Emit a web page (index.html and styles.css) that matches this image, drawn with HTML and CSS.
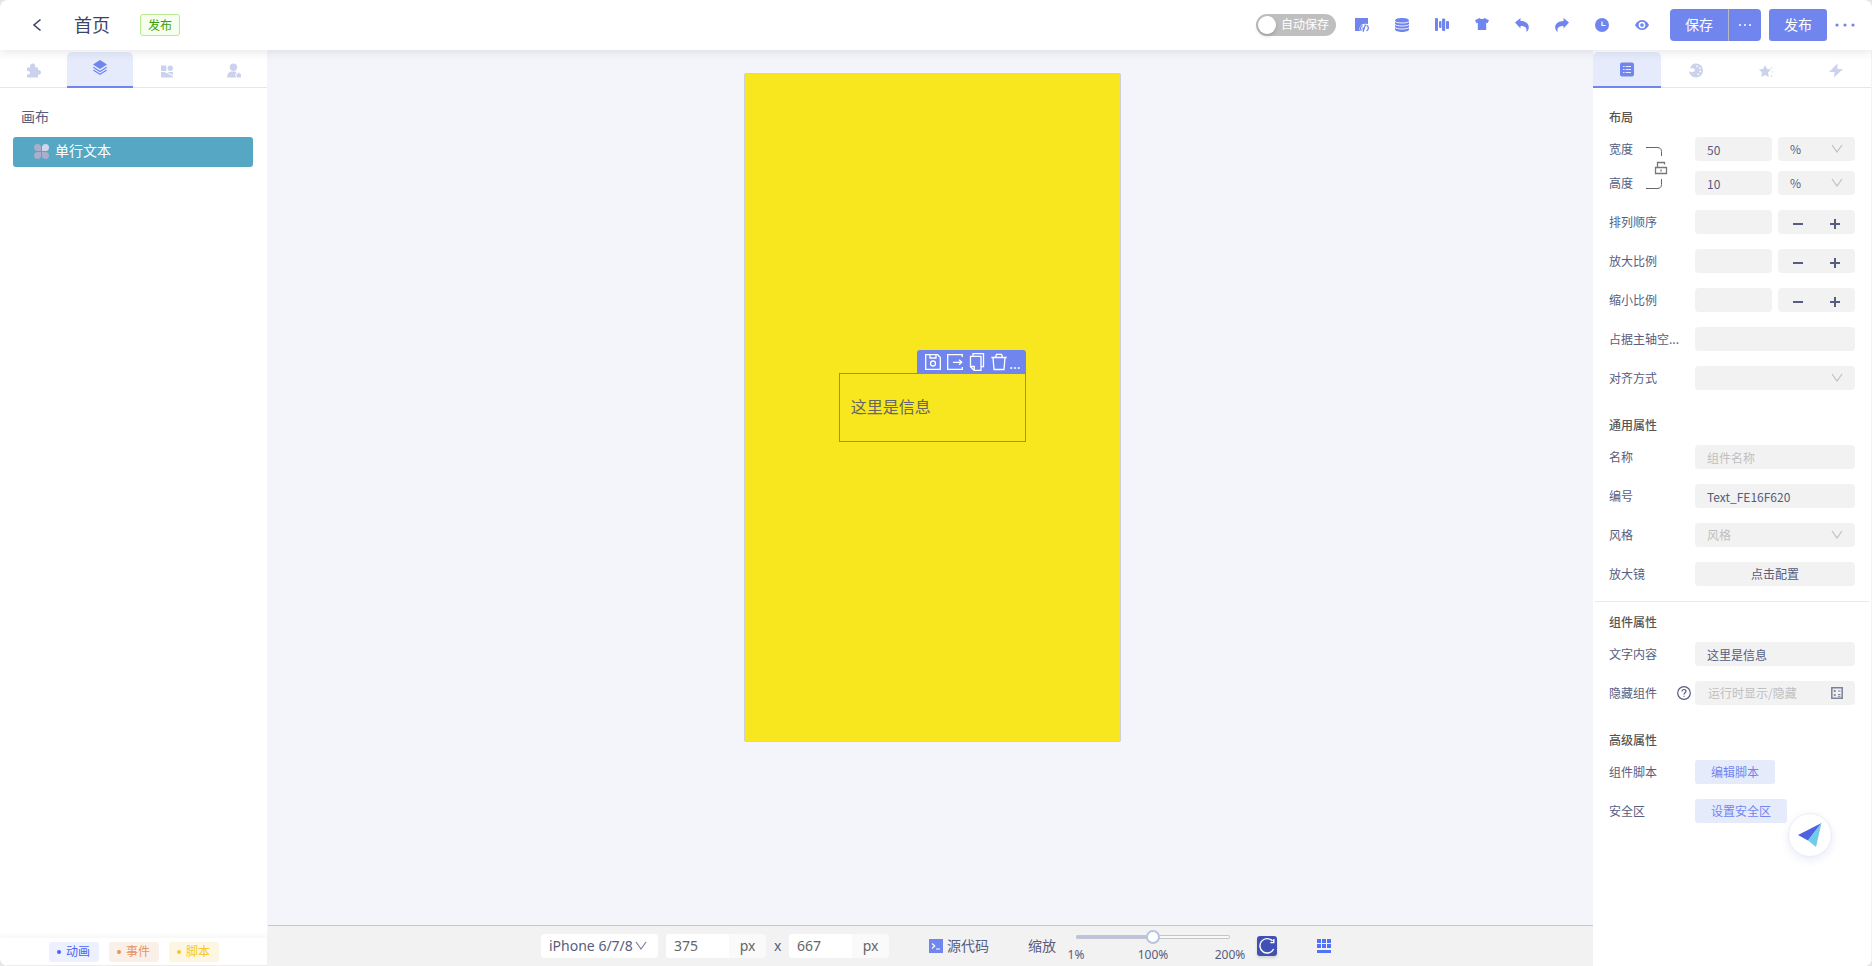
FILE: index.html
```html
<!DOCTYPE html>
<html lang="zh-CN">
<head>
<meta charset="utf-8">
<title>首页</title>
<link rel="stylesheet" href="styles.css">
</head>
<body>
<svg class="defs" aria-hidden="true">
  <symbol id="chev" viewBox="0 0 12 10"><path d="M1 1l5 7 5-7" fill="none" stroke="currentColor" stroke-width="1.2"/></symbol>
</svg>
<div class="app">
  <header class="topbar">
    <button class="icon-btn back" aria-label="返回"><svg width="10" height="14" viewBox="0 0 10 14"><path d="M8.500 1.500L2 7l6.500 5.500" fill="none" stroke="#3c4468" stroke-width="1.600"/></svg></button>
    <h1 class="title">首页</h1>
    <span class="status">发布</span>
    <div class="tools">
      <label class="switch"><input type="checkbox"><span class="knob"></span><span>自动保存</span></label>
      <button class="icon-btn tool" aria-label="代码"><svg viewBox="0 0 14 14"><path d="M0 0h13v6.200C9 5 5 6.500 4.500 10c0 1.200 0 2.200.5 3H0z" fill="currentColor"/><path d="M7.500 7.300C5 8.500 5 11.500 6.500 12.800M11.500 7.300c2.500 1 2.500 4.300 0 5.500M10.500 6.500l-2.500 7.200M8 9.500v2" fill="none" stroke="currentColor" stroke-width="1.300"/></svg></button>
      <button class="icon-btn tool" aria-label="数据"><svg viewBox="0 0 14 14"><path d="M0 2.500C0-.8 14-.8 14 2.500v9c0 3.300-14 3.300-14 0z" fill="currentColor"/><path d="M0 3.500c2 2 12 2 14 0M0 6.500c2 2 12 2 14 0M0 9.500c2 2 12 2 14 0" fill="none" stroke="#fff" stroke-width=".9"/></svg></button>
      <button class="icon-btn tool" aria-label="对齐"><svg viewBox="0 0 14 14" fill="currentColor"><rect width="3" height="13" rx="1"/><rect x="4" y="3" width="2.500" height="7" rx="1"/><rect x="7" y="0.500" width="3.200" height="12.500" rx="1"/><rect x="11" y="3" width="3" height="8" rx="1"/></svg></button>
      <button class="icon-btn tool" aria-label="主题"><svg viewBox="0 0 14 14" fill="currentColor"><path d="M4.500 0c1 1.300 4 1.300 5 0L14 2.200l-1.500 3-1.300-.5V12H2.800V4.700l-1.300.5L0 2.200z"/></svg></button>
      <button class="icon-btn tool" aria-label="撤销"><svg viewBox="0 0 14 14" fill="currentColor"><path d="M0 4.600L5.500 0v3c5.500 0 8.500 3 8.300 6.500-.1 2-1 3.500-2.600 4.500 1.300-4-1-6-5.700-6v2.500z"/></svg></button>
      <button class="icon-btn tool" aria-label="重做"><svg viewBox="0 0 14 14" fill="currentColor"><path d="M14 4.600L8.500 0v3C3 3 0 6 .2 9.500c.1 2 1 3.500 2.600 4.500-1.300-4 1-6 5.700-6v2.500z"/></svg></button>
      <button class="icon-btn tool" aria-label="历史"><svg viewBox="0 0 14 14"><circle cx="7" cy="7" r="7" fill="currentColor"/><path d="M7 3.500v4h3.500" fill="none" stroke="#fff" stroke-width="1.200"/></svg></button>
      <button class="icon-btn tool" aria-label="预览"><svg viewBox="0 0 14 14"><path d="M0 7C3.500.4 10.500.4 14 7 10.500 13.600 3.500 13.600 0 7z" fill="currentColor"/><circle cx="7" cy="7" r="2.600" fill="currentColor" stroke="#fff" stroke-width="1.500"/></svg></button>
    </div>
    <div class="actions">
      <div class="split"><button class="primary">保存</button><button class="primary more" aria-label="更多保存"><svg width="14" height="4" viewBox="0 0 14 4" fill="#fff"><circle cx="2" cy="2" r="1"/><circle cx="7" cy="2" r="1"/><circle cx="12" cy="2" r="1"/></svg></button></div>
      <button class="primary">发布</button>
      <button class="icon-btn" aria-label="更多"><svg width="20" height="4" viewBox="0 0 20 4" fill="#7086ee"><circle cx="2" cy="2" r="1.600"/><circle cx="10" cy="2" r="1.600"/><circle cx="18" cy="2" r="1.600"/></svg></button>
    </div>
  </header>

  <div class="body">
    <aside class="left">
      <nav class="tabs">
        <button class="tab" aria-label="组件"><svg viewBox="0 0 14 14" fill="currentColor"><path d="M0 4h3.200C2.400 1.800 4 0 5.700 0S9 1.800 8.200 4H11v2.600c1.500-.6 3 .4 3 2.200s-1.500 2.900-3 2.200V14H0v-3.200c1.800.6 3-.3 3-1.500S1.800 7 0 7.600z"/></svg></button>
        <button class="tab active" aria-label="图层"><svg viewBox="0 0 14 15"><path d="M7 0l7 4.500L7 9 0 4.500z" fill="currentColor"/><path d="M.3 7.300L7 11.500l6.700-4.200M.3 10L7 14.200l6.700-4.200" fill="none" stroke="currentColor" stroke-width="1.200"/></svg></button>
        <button class="tab" aria-label="模板"><svg viewBox="0 0 14 14" fill="currentColor"><path d="M1 2h5.400v5.400H1zM1 8.500h3L8 10l5 3v1H1zM7 8.500h6v3z"/><circle cx="10.300" cy="4.700" r="2.700"/></svg></button>
        <button class="tab" aria-label="用户"><svg viewBox="0 0 14 14" fill="currentColor"><circle cx="6.500" cy="3.700" r="3.700"/><path d="M0 14c.3-3.500 1.500-5.500 4-6h4c.8.2 1.300.7 1.600 1.400L8 11l1.200 3zM9.500 10.500h1.200c0-2 2-2 2 0H14v3.500H9.800v-1.200c-1 0-1-1.300-.3-1.300z"/></svg></button>
      </nav>
      <div class="tree">
        <h2 class="tree-title">画布</h2>
        <button class="node"><svg width="15" height="15" viewBox="0 0 15 15" fill="#a9aecb"><path d="M7 7H3.500A3.500 3.500 0 1 1 7 3.500zM7 8v3.500A3.500 3.500 0 1 1 3.500 8zM8 8h3.500A3.500 3.500 0 1 1 8 11.500z"/><path d="M8 7V3.500A3.500 3.500 0 1 1 11.500 7z" fill="#d3d6ea"/></svg>单行文本</button>
      </div>
      <footer class="legend">
        <button class="tag blue">动画</button><button class="tag orange">事件</button><button class="tag yellow">脚本</button>
      </footer>
    </aside>

    <main class="center">
      <div class="stage">
        <div class="phone">
          <div class="selection">
            <div class="mini">
              <button aria-label="保存"><svg viewBox="0 0 16 18"><path d="M.7 1.700h12L15.300 4.500v11.800H.7zM5 2v3h6V2" /><circle cx="8" cy="10.500" r="2.500"/></svg></button>
              <button aria-label="导出"><svg viewBox="0 0 16 18"><path d="M15.300 4V1.700H.7v14.600h14.600V14M6 9.300h8.500M12 6.800l2.800 2.500-2.800 2.500"/></svg></button>
              <button aria-label="复制"><svg viewBox="0 0 16 18"><path d="M4 3V.7h10.500v13H12M1.500 3.300H12v14H5l-3.500-3.500zM1.500 13.500H5.300v3.800"/></svg></button>
              <button aria-label="删除"><svg viewBox="0 0 16 18"><path d="M.3 4.500h15.400M2 4.500l1 12h10l1-12M4.500 4.300l1-3h5l1 3"/></svg></button>
              <button class="dots" aria-label="更多">...</button>
            </div>
            <span>这里是信息</span>
          </div>
        </div>
      </div>
      <footer class="bottombar">
        <div class="select device"><select aria-label="设备"><option>iPhone 6/7/8</option></select><svg class="chev"><use href="#chev"/></svg></div>
        <div class="size"><input aria-label="宽度" value="375"><span>px</span></div>
        <span class="times">x</span>
        <div class="size"><input aria-label="高度" value="667"><span>px</span></div>
        <button class="source"><svg width="14" height="14" viewBox="0 0 14 14"><path d="M0 0h14v14H0z" fill="#7086ee"/><path d="M3 4.500l2.800 2.500L3 9.500M7 10h4" fill="none" stroke="#fff" stroke-width="1.100"/></svg>源代码</button>
        <label class="zoom-label" for="zoom">缩放</label>
        <div class="zoom"><input id="zoom" type="range" min="1" max="200" value="100"><div class="marks"><span>1%</span><span>100%</span><span>200%</span></div></div>
        <button class="reload" aria-label="重置"><svg width="20" height="20" viewBox="0 0 20 20"><path d="M15.500 5A7.200 7.200 0 1 0 16.600 13M16.800 3v3.600h-3.500" fill="none" stroke="#fff" stroke-width="1.400"/></svg></button>
        <button class="icon-btn grid" aria-label="网格"><svg width="14" height="14" viewBox="0 0 14 14" fill="#5073fa"><path d="M0 0h4v4H0zM5 0h4v4H5zM10 0h4v4h-4zM0 5h4v4H0zM5 5h4v4H5zM10 5h4v4h-4zM0 11h14v3H0z"/></svg></button>
      </footer>
    </main>

    <aside class="right">
      <nav class="tabs">
        <button class="tab active" aria-label="属性"><svg viewBox="0 0 14 14"><rect width="14" height="14" rx="2" fill="currentColor"/><path d="M3 4h1.500M3 7h1.500M3 10h1.500M5.500 4H11M5.500 7H11M5.500 10H11" stroke="#e6ebfb" stroke-width="1"/></svg></button>
        <button class="tab" aria-label="样式"><svg viewBox="0 0 14 14"><path d="M4.500 0.500C10.500-1.500 14 3 14 7s-3 7-7 7S0 11 0 7.500c1.500 1.800 5 1.500 5.800-.5C6.300 5.300 4 4.500 1 4.800 1.500 3 3 1.200 4.500.5z" fill="currentColor"/><g fill="#fff"><circle cx="8" cy="2.800" r=".9"/><circle cx="10.800" cy="4.800" r=".9"/><circle cx="11.300" cy="8" r=".9"/><circle cx="9.300" cy="10.800" r=".9"/></g></svg></button>
        <button class="tab" aria-label="动效"><svg viewBox="0 0 14 14" fill="currentColor"><path d="M6 1.500l1.900 4 4.100.5-3 3 .8 4.500L6 11.400 2.200 13.500 3 9 0 6l4.100-.5zM11.500 4h1.500v1h-1.500zM12.500 8H14v1h-1.500zM11.500 12h2v1h-2z"/></svg></button>
        <button class="tab" aria-label="事件"><svg viewBox="0 0 14 14" fill="currentColor"><path d="M8.500 0L0 8.500h5.500L5 14l9-8.500H8.300z"/></svg></button>
      </nav>
      <form class="props">
        <section>
          <h2>布局</h2>
          <div class="linked">
            <div class="labels"><label for="w">宽度</label><label for="h">高度</label></div>
            <svg class="link" width="22" height="44" viewBox="0 0 22 44" fill="none" stroke="#666"><path d="M0 1.500h11q4.500 0 4.500 4V10M0 42.500h11q4.500 0 4.500-4V33"/><path d="M9.500 21.500h11v6h-11zM11.500 21v-4.500h7v2M15 23.500v2" stroke="#777" stroke-width="1.300"/></svg>
            <div class="fields">
              <div class="pair"><input id="w" value="50"><div class="select"><select aria-label="宽度单位"><option>%</option></select><svg class="chev"><use href="#chev"/></svg></div></div>
              <div class="pair"><input id="h" value="10"><div class="select"><select aria-label="高度单位"><option>%</option></select><svg class="chev"><use href="#chev"/></svg></div></div>
            </div>
          </div>
          <div class="row"><label for="o">排列顺序</label><div class="pair"><input id="o"><div class="stepper"><button type="button" class="minus" aria-label="减少"></button><button type="button" class="plus" aria-label="增加"></button></div></div></div>
          <div class="row"><label for="g">放大比例</label><div class="pair"><input id="g"><div class="stepper"><button type="button" class="minus" aria-label="减少"></button><button type="button" class="plus" aria-label="增加"></button></div></div></div>
          <div class="row"><label for="s">缩小比例</label><div class="pair"><input id="s"><div class="stepper"><button type="button" class="minus" aria-label="减少"></button><button type="button" class="plus" aria-label="增加"></button></div></div></div>
          <div class="row"><label for="b">占据主轴空...</label><input id="b"></div>
          <div class="row"><label for="a">对齐方式</label><div class="select"><select id="a"><option></option></select><svg class="chev"><use href="#chev"/></svg></div></div>
        </section>
        <section class="ruled">
          <h2>通用属性</h2>
          <div class="row"><label for="n">名称</label><input id="n" placeholder="组件名称"></div>
          <div class="row"><label for="id">编号</label><input id="id" value="Text_FE16F620"></div>
          <div class="row"><label for="st">风格</label><div class="select empty"><select id="st"><option>风格</option></select><svg class="chev"><use href="#chev"/></svg></div></div>
          <div class="row"><label for="m">放大镜</label><button type="button" class="config" id="m">点击配置</button></div>
        </section>
        <section>
          <h2>组件属性</h2>
          <div class="row"><label for="t">文字内容</label><input id="t" value="这里是信息"></div>
          <div class="row"><label for="hid">隐藏组件<svg width="14" height="14" viewBox="0 0 14 14" fill="none" stroke="#565d80" stroke-width="1.200"><circle cx="7" cy="7" r="6.300"/><path d="M5 5.500c0-2.600 4-2.600 4-.2C9 6.800 7 6.700 7 8.500M7 9.700v1.100"/></svg></label><div class="formula"><input id="hid" placeholder="运行时显示/隐藏"><svg width="12" height="12" viewBox="0 0 12 12" fill="none" stroke="#7c8199"><path d="M.8.8h10.400v10.400H.8z" stroke-width="1.500"/><path d="M2.500 4h2.500M3.700 2.800v2.400M7 4h2.500M2.700 7l2 2.200M4.700 7l-2 2.200M7 7.500h2.500M7 9.300h2.500"/></svg></div></div>
        </section>
        <section>
          <h2>高级属性</h2>
          <div class="row"><label for="js">组件脚本</label><button type="button" class="soft" id="js">编辑脚本</button></div>
          <div class="row"><label for="safe">安全区</label><button type="button" class="soft" id="safe">设置安全区</button></div>
        </section>
      </form>
      <button class="send" aria-label="发送"><svg width="24" height="24" viewBox="0 0 24 24"><path d="M0 12L23.500 0 10 17.500z" fill="#5062e0"/><path d="M23.500 0L18 24l-8-6.500z" fill="#6fcbea"/></svg></button>
    </aside>
  </div>
</div>
</body>
</html>
```

FILE: styles.css
```css
* { box-sizing: border-box; }
html, body { height: 100%; }
body { margin: 0; background: #e6e6e8; color: #565d80; font: 12px/20px "Noto Sans", "Noto Sans CJK SC", sans-serif; }
button, input, select { font: inherit; color: inherit; border: 0; margin: 0; padding: 0; background: none; outline: 0; }
button { cursor: pointer; }
svg { display: block; flex: none; }
h1, h2 { margin: 0; font-weight: 400; }
.defs { position: absolute; width: 0; height: 0; }

.app { height: 100vh; display: flex; flex-direction: column; border-radius: 8px; overflow: hidden; background: #f4f5fa; }
.icon-btn { display: flex; align-items: center; justify-content: center; }

.topbar { flex: none; height: 50px; display: flex; align-items: center; padding: 0 17px 0 32px; background: #fff; box-shadow: 0 1px 10px rgba(30, 35, 70, .13); position: relative; z-index: 2; }
.title { margin-left: 32px; font-size: 18px; line-height: 26px; color: #3c4468; }
.status { height: 22px; margin-left: 30px; padding: 0 7px; border: 1px solid #b7eb8f; border-radius: 3px; background: #f6ffed; color: #389e0d; line-height: 22px; }
.tools { margin-left: auto; display: flex; align-items: center; color: #7086ee; }
.tool { width: 40px; height: 40px; }
.tool svg { width: 14px; height: 14px; overflow: visible; }
.switch { display: flex; align-items: center; gap: 5px; width: 80px; height: 22px; margin-right: 6px; padding: 0 2px; border-radius: 11px; background: #bfbfbf; color: #fff; }
.switch input { position: absolute; opacity: 0; }
.knob { width: 18px; height: 18px; border-radius: 9px; background: #fff; box-shadow: 0 2px 4px rgba(0, 35, 11, .2); }
.actions { display: flex; align-items: center; gap: 8px; margin-left: 8px; }
.split { display: flex; border-radius: 4px; overflow: hidden; }
.primary { width: 58px; height: 32px; border-radius: 3px; background: #7086ee; color: #fff; font-size: 14px; display: flex; align-items: center; justify-content: center; }
.split .primary { border-radius: 0; }
.primary.more { width: 33px; border-left: 1px solid #bcb9c4; }

.body { flex: 1; min-height: 0; display: flex; }
.left { flex: none; width: 267px; margin-right: 1px; display: flex; flex-direction: column; background: #fff; }
.tabs { display: flex; height: 38px; padding-top: 2px; border-bottom: 1px solid #e6e6e8; }
.tab { flex: 1; display: flex; align-items: center; justify-content: center; padding-top: 2px; color: #ccd2ee; }
.tab svg { width: 14px; height: 15px; }
.tab.active { flex: none; width: 66px; height: 36px; padding-top: 0; border-radius: 5px 5px 0 0; border-bottom: 2px solid #7086ee; background: #e6ebfb; color: #7086ee; }
.left .tab.active { padding-bottom: 3px; }
.right .tab.active { width: 68px; }
.tree { flex: 1; padding: 19px 14px 0 13px; }
.tree-title { padding-left: 8px; font-size: 14px; }
.node { width: 100%; height: 30px; margin-top: 10px; padding: 0 0 2px 21px; display: flex; align-items: center; gap: 6px; border-radius: 3px; background: #56a7c4; color: #fff; font-size: 14px; }
.legend { display: flex; justify-content: center; gap: 10px; padding: 4px 0; height: 28px; border-bottom: 1px solid #ececec; box-shadow: 0 -2px 6px rgba(60, 50, 100, .05); }
.tag { width: 50px; height: 20px; border-radius: 3px; display: flex; align-items: center; justify-content: center; gap: 5px; }
.tag::before { content: ""; width: 4px; height: 4px; border-radius: 2px; background: currentColor; }
.blue { background: #edf1ff; color: #4763ef; }
.orange { background: #faf0ea; color: #e8935a; }
.yellow { background: #fcf6e2; color: #f5c72c; }

.center { flex: 1; min-width: 0; display: flex; flex-direction: column; }
.stage { flex: 1; min-height: 0; padding: 23px 0 0 4px; display: flex; justify-content: center; align-items: flex-start; }
.phone { width: 377px; height: 669px; border: 1px solid #ccd0d9; border-radius: 2px; background: #f8e71f; display: flex; align-items: center; justify-content: center; }
.selection { position: relative; width: 50%; padding: 21px 11px; border: 1px solid #7086ee; color: #666; font-size: 16px; line-height: 25px; }
.mini { position: absolute; right: -1px; bottom: 100%; width: 109px; height: 24px; padding: 0 4px 0 8px; display: flex; align-items: center; gap: 6px; border-radius: 3px 3px 0 0; background: #7086ee; color: #fff; }
.mini svg { width: 16px; height: 18px; fill: none; stroke: #fff; stroke-width: 1.3; }
.mini .dots { margin-left: -4px; line-height: 20px; align-self: flex-end; font-size: 14px; }

.bottombar { flex: none; height: 41px; display: flex; align-items: center; padding-left: 273px; border-top: 1px solid #c3c7da; background: #f2f2f2; font-size: 14px; }
.select { position: relative; }
.select select { display: block; width: 100%; height: 24px; padding: 0 12px; appearance: none; border-radius: 4px; background: #f2f2f2; }
.chev { position: absolute; right: 12px; top: 7px; width: 12px; height: 10px; color: #bfbfbf; pointer-events: none; }
.device { width: 117px; }
.bottombar .device select { background: #fff; padding: 0 8px; }
.device .chev { right: 11px; color: #7c8199; }
.size { display: flex; width: 100px; height: 24px; margin-left: 8px; border-radius: 4px; overflow: hidden; background: #fafafa; color: #666; line-height: 24px; }
.size input { width: 63px; padding: 0 8px; background: #fff; }
.size span { flex: 1; text-align: center; }
.times { margin-left: 8px; width: 7px; }
.source { display: flex; align-items: center; gap: 4px; margin-left: 40px; }
.zoom-label { margin-left: 39px; }
.zoom { width: 154px; margin-left: 20px; padding-top: 3px; font-size: 12px; }
.zoom input { display: block; width: 100%; height: 14px; appearance: none; }
.zoom input::-webkit-slider-runnable-track { height: 4px; border-radius: 2px; background: linear-gradient(90deg, #b9c3e2 50%, #f8f8f8 50%); box-shadow: inset 0 0 0 1px #c4c6cc; }
.zoom input::-webkit-slider-thumb { appearance: none; width: 14px; height: 14px; margin-top: -5px; border: 2px solid #b9c3e2; border-radius: 7px; background: #fff; }
.marks { display: flex; justify-content: space-between; margin: 0 -20px; padding-top: 1px; }
.marks span { width: 40px; text-align: center; }
.reload { margin-left: 27px; border-radius: 3px; background: #3f51b5; box-shadow: 0 2px 3px rgba(0, 0, 0, .12); }
.grid { margin-left: 40px; }

.right { position: relative; flex: none; width: 279px; border-right: 1px solid #f2f3f6; background: #fff; }
.props { padding: 9px 16px 0; font-family: "Noto Sans CJK SC", sans-serif; }
.props section { padding-top: 10px; }
.props h2 { margin-bottom: 10px; font-size: 12px; font-weight: 500; color: #555; }
.props input { width: 100%; height: 24px; padding: 0 12px; border-radius: 4px; background: #f2f2f2; }
.props ::placeholder { color: #bfbfbf; opacity: 1; }
.ruled::after { content: ""; display: block; height: 1px; margin: 0 -14px; background: #ebebed; }
.row { display: grid; grid-template-columns: 86px minmax(0, 1fr); align-items: center; margin-bottom: 15px; }
.row label { display: flex; align-items: center; gap: 20px; white-space: nowrap; }
.linked { display: grid; grid-template-columns: 37px 49px minmax(0, 1fr); align-items: center; margin-bottom: 15px; }
.link { margin-top: 4px; }
.labels, .fields { display: grid; gap: 10px; }
.labels { line-height: 24px; }
.pair { display: grid; grid-template-columns: 1fr 1fr; gap: 6px; }
.pair > * { min-width: 0; }
.empty select { color: #bfbfbf; }
.stepper { display: flex; justify-content: space-between; align-items: center; border-radius: 4px; background: #f2f2f2; padding: 3px 15px 0; }
.minus, .plus { width: 10px; height: 10px; background: linear-gradient(#565d80, #565d80) center / 10px 2px no-repeat; }
.plus { background: linear-gradient(#565d80, #565d80) center / 10px 2px no-repeat, linear-gradient(#565d80, #565d80) center / 2px 10px no-repeat; }
.config { height: 24px; border-radius: 4px; background: #f2f2f2; }
.formula { display: flex; align-items: center; height: 24px; padding: 0 12px 0 13px; border-radius: 4px; background: #f2f2f2; }
.props .formula input { height: 14px; padding: 0; }
.soft { justify-self: start; height: 24px; padding: 0 16px; border-radius: 3px; background: #e6ebfb; color: #7086ee; }
.send { position: absolute; right: 39px; bottom: 109px; width: 44px; height: 44px; display: flex; align-items: center; justify-content: center; border: 1px solid #eaedf7; border-radius: 22px; background: #fff; box-shadow: 0 3px 8px rgba(80, 98, 180, .12); }
```
